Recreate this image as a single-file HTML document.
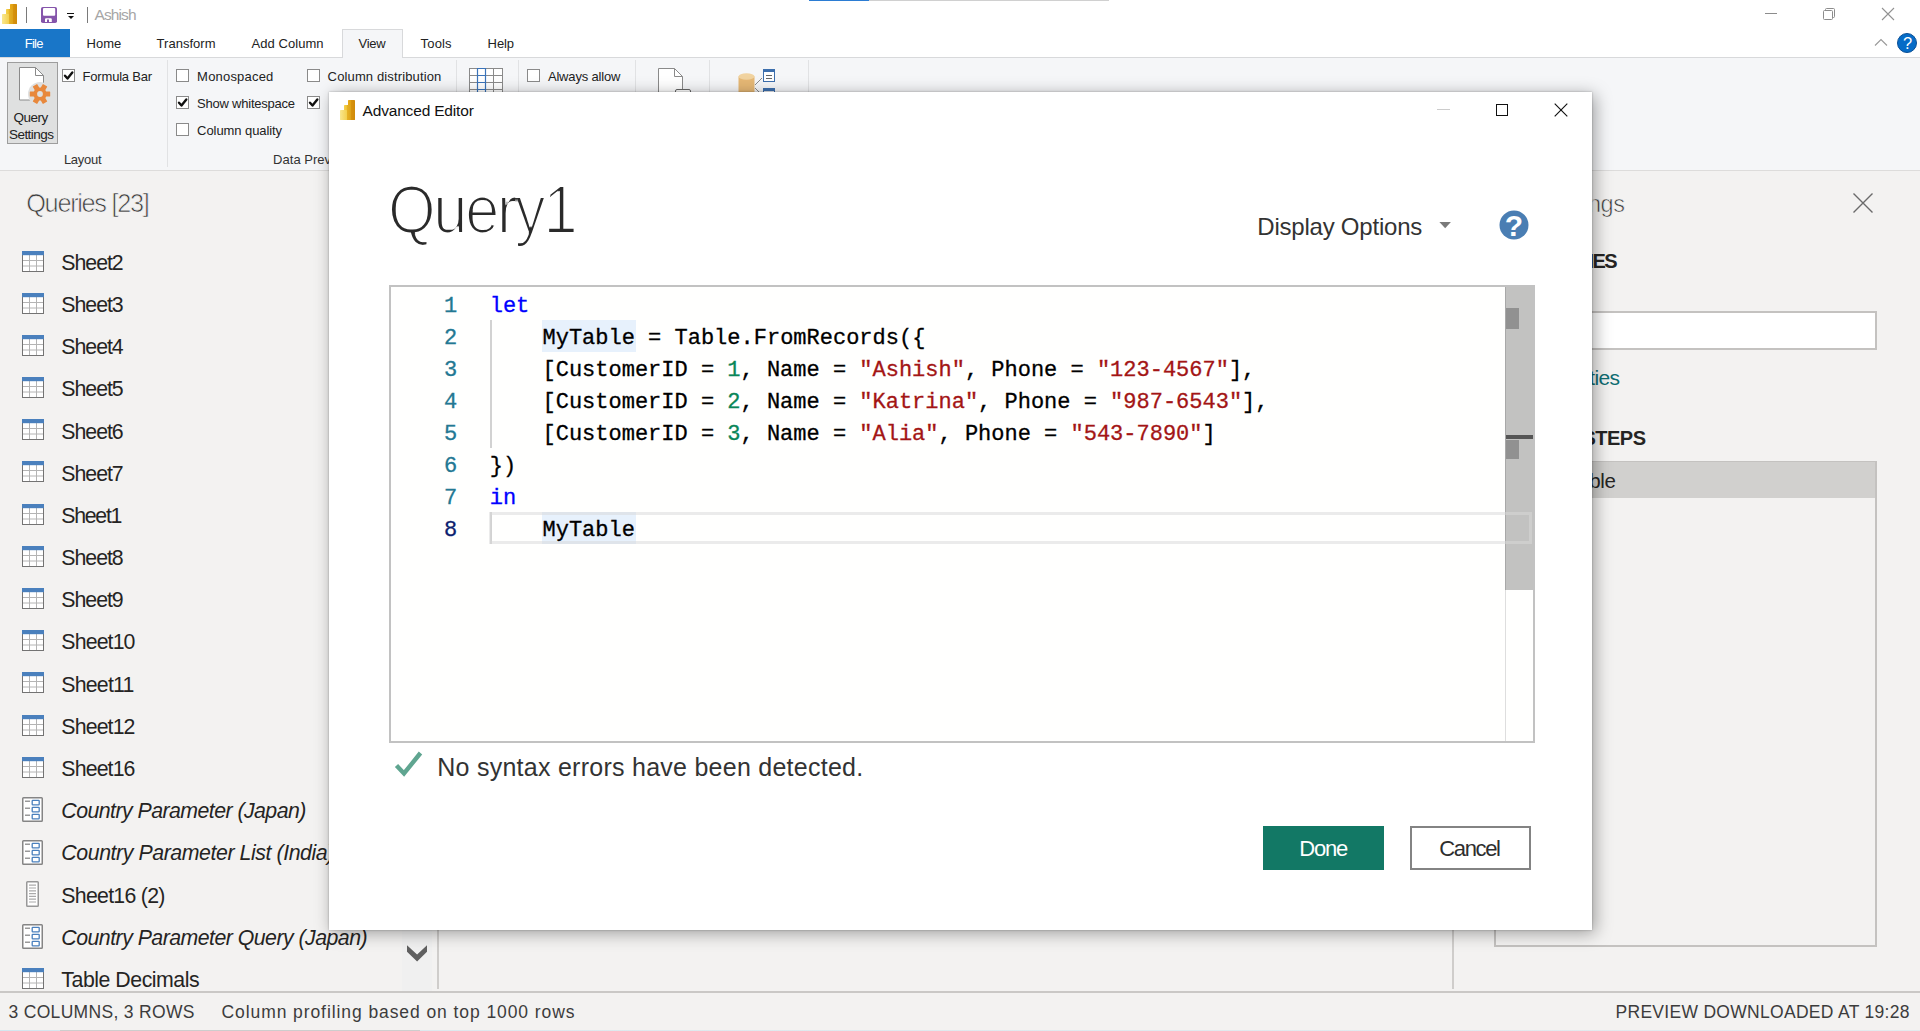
<!DOCTYPE html>
<html lang="en"><head><meta charset="utf-8"><title>Advanced Editor</title>
<style>
*{box-sizing:border-box;margin:0;padding:0}
html,body{width:1920px;height:1031px;overflow:hidden;background:#f3f2f1;font-family:"Liberation Sans",sans-serif}
.a{position:absolute}
.t{position:absolute;white-space:pre;line-height:1;display:block}
.m{font-family:"Liberation Mono",monospace}
#app{position:absolute;left:0;top:0;width:1920px;height:1031px;overflow:hidden}
.cb{position:absolute;width:13px;height:13px;border:1px solid #8a8a8a;background:#fff}
.cb svg{position:absolute;left:0;top:0}
.sep{position:absolute;width:1px;background:#e1e2e4;top:60px;height:107px}
.qi{position:absolute;left:22px;width:22px;height:21px}
.pi{position:absolute;left:22px;width:21px;height:25px}
</style></head><body><div id="app">
<!-- title bar -->
<div class="a" style="left:0;top:0;width:1920px;height:57px;background:#fff"></div>
<div class="a" style="left:809px;top:0;width:60px;height:1px;background:#2b7cd3"></div>
<div class="a" style="left:869px;top:0;width:240px;height:1px;background:#d0d0d0"></div>
<!-- powerbi logo -->
<svg class="a" style="left:2px;top:4px" width="15" height="20" viewBox="0 0 15 20"><defs><linearGradient id="g1" x1="0" x2="1"><stop offset="0" stop-color="#e8ab18"/><stop offset="0.45" stop-color="#e0a012"/><stop offset="0.5" stop-color="#d6920c"/><stop offset="1" stop-color="#cf8a0a"/></linearGradient><linearGradient id="g2" x1="0" x2="1"><stop offset="0" stop-color="#f5d24e"/><stop offset="0.4" stop-color="#efc234"/><stop offset="0.45" stop-color="#e6b225"/><stop offset="1" stop-color="#dda21a"/></linearGradient><linearGradient id="g3" x1="0" x2="1"><stop offset="0" stop-color="#f9e78f"/><stop offset="1" stop-color="#f3d04e"/></linearGradient></defs><rect x="8" y="0" width="7" height="20" rx="0.6" fill="url(#g1)"/><rect x="4" y="5" width="7" height="15" rx="0.6" fill="url(#g2)"/><rect x="0" y="10" width="7" height="10" rx="0.6" fill="url(#g3)"/></svg>
<div class="a" style="left:26px;top:7px;width:1px;height:16px;background:#7a7a7a"></div>
<!-- save icon -->
<svg class="a" style="left:41px;top:7px" width="16" height="16" viewBox="0 0 16 16"><rect x="0" y="0" width="16" height="16" rx="1.8" fill="#8555ab"/><rect x="2" y="0.9" width="12.2" height="7.8" rx="1" fill="#fff"/><path d="M4 14.9v-2.7a1 1 0 0 1 1-1h4.8a1 1 0 0 1 1 1v2.7h-2.8v-2.4h-2v2.4z" fill="#fff"/></svg>
<div class="a" style="left:67px;top:13px;width:7px;height:1px;background:#111"></div>
<div class="a" style="left:67.5px;top:16px;width:0;height:0;border-left:3px solid transparent;border-right:3px solid transparent;border-top:3px solid #111"></div>
<div class="a" style="left:87px;top:7px;width:1px;height:16px;background:#7a7a7a"></div>
<!-- window controls -->
<div class="a" style="left:1765px;top:13px;width:12px;height:1px;background:#8c8c8c"></div>
<svg class="a" style="left:1822px;top:7px" width="14" height="14" viewBox="0 0 14 14" fill="none" stroke="#8c8c8c" stroke-width="1"><rect x="1.5" y="3.5" width="9" height="9" rx="1"/><path d="M3.5 3.5v-1a1 1 0 0 1 1-1h7a1 1 0 0 1 1 1v7a1 1 0 0 1-1 1h-1"/></svg>
<svg class="a" style="left:1881px;top:7px" width="14" height="14" viewBox="0 0 14 14" fill="none" stroke="#929292" stroke-width="1.1"><path d="M1 1l12 12M13 1l-12 12"/></svg>
<!-- tabs -->
<div class="a" style="left:0;top:29px;width:70px;height:28px;background:#1976c8"></div>
<div class="a" style="left:0;top:57px;width:1920px;height:113px;background:#f5f6f8"></div>
<div class="a" style="left:0;top:57px;width:1920px;height:1px;background:#d8d9db"></div>
<div class="a" style="left:342px;top:29px;width:61px;height:29px;background:#f5f6f8;border:1px solid #d8d9db;border-bottom:none"></div>
<div class="a" style="left:0;top:170px;width:1920px;height:1px;background:#dddcdb"></div>
<svg class="a" style="left:1873px;top:37px" width="16" height="10" viewBox="0 0 16 10" fill="none" stroke="#999" stroke-width="1.1"><path d="M2 8.5l6-6 6 6"/></svg>
<div class="a" style="left:1897px;top:33px;width:20px;height:20px;border-radius:50%;background:#066cc7;border:1px solid #0a4f96"></div>
<!-- ribbon -->
<div class="a" style="left:7px;top:62px;width:51px;height:82px;background:#dfe0e0;border:1px solid #9d9d9d"></div>
<svg class="a" style="left:18px;top:66px" width="36" height="40" viewBox="0 0 36 40"><path d="M1.5 1.5h16l8 8v24.5h-24z" fill="#fff" stroke="#8a8a8a" stroke-width="1"/><path d="M17.5 1.5v8h8" fill="none" stroke="#8a8a8a" stroke-width="1"/><circle cx="22" cy="28" r="12" fill="#dfe0e0"/><g transform="translate(22 28) rotate(90)" fill="#e8883c"><circle r="6.6"/><g id="tt"><rect x="-2.6" y="-10.2" width="5.2" height="20.4" rx="0.6"/></g><use href="#tt" transform="rotate(60)"/><use href="#tt" transform="rotate(120)"/><circle r="2.9" fill="#dfe0e0"/></g></svg>
<div class="sep" style="left:167px"></div>
<div class="sep" style="left:456px"></div>
<div class="sep" style="left:518px"></div>
<div class="sep" style="left:635px"></div>
<div class="sep" style="left:709px"></div>
<div class="sep" style="left:808px"></div>
<div class="cb" style="left:62px;top:69px"><svg width="11" height="11" viewBox="0 0 11 11"><path d="M2 5.7L4.5 8.5L9.3 2.5" fill="none" stroke="#111" stroke-width="2.4" stroke-linecap="round" stroke-linejoin="round"/></svg></div>
<div class="cb" style="left:176px;top:69px"></div>
<div class="cb" style="left:176px;top:96px"><svg width="11" height="11" viewBox="0 0 11 11"><path d="M2 5.7L4.5 8.5L9.3 2.5" fill="none" stroke="#111" stroke-width="2.4" stroke-linecap="round" stroke-linejoin="round"/></svg></div>
<div class="cb" style="left:176px;top:123px"></div>
<div class="cb" style="left:307px;top:69px"></div>
<div class="cb" style="left:307px;top:96px"><svg width="11" height="11" viewBox="0 0 11 11"><path d="M2 5.7L4.5 8.5L9.3 2.5" fill="none" stroke="#111" stroke-width="2.4" stroke-linecap="round" stroke-linejoin="round"/></svg></div>
<div class="cb" style="left:527px;top:69px"></div>
<!-- table icon -->
<svg class="a" style="left:469px;top:68px" width="34" height="30" viewBox="0 0 34 30" fill="none" stroke="#8a8a8a" stroke-width="1"><rect x="0.5" y="0.5" width="33" height="29" fill="#fff"/><path d="M8.5 0v30M16.5 0v30M24.5 0v30M0 7.5h34M0 14.5h34M0 21.5h34"/><path d="M8.5 0v30M16.5 0v30M8 7.5h9M8 14.5h9M8 21.5h9M8 0.5h9" stroke="#3b73b9" stroke-width="1.2"/></svg>
<!-- doc icon -->
<svg class="a" style="left:657px;top:67px" width="36" height="30" viewBox="0 0 36 30" fill="none" stroke="#8a8a8a" stroke-width="1"><path d="M1.5 1.5h16l8 8v21h-24z" fill="#fff"/><path d="M17.5 1.5v8h8"/><rect x="18.5" y="22.5" width="15" height="8" rx="1.5" fill="#fff" stroke="#666"/></svg>
<!-- db icon -->
<svg class="a" style="left:738px;top:68px" width="40" height="30" viewBox="0 0 40 30"><path d="M0.5 8.5v22h16v-22z" fill="#e6b875"/><ellipse cx="8.5" cy="8.5" rx="8" ry="3.2" fill="#f1d3a0"/><path d="M17 17l7-7M17 20l5 5" stroke="#8a8a8a" stroke-width="1" fill="none"/><rect x="25.5" y="1.5" width="11" height="12" fill="#fff" stroke="#3d6fad"/><rect x="25" y="1" width="12" height="3" fill="#3d6fad"/><path d="M28 7.5h6M28 10.5h6" stroke="#666"/><rect x="25" y="20" width="12" height="3" fill="#3d6fad"/><rect x="25.5" y="20.5" width="11" height="10" fill="none" stroke="#3d6fad"/></svg>
<!-- queries pane -->
<div class="a" style="left:402px;top:171px;width:30px;height:820px;background:#f0f0f0"></div>
<div class="a" style="left:437px;top:171px;width:2px;height:818px;background:#cfcdcb"></div>
<div class="a" style="left:1452px;top:171px;width:2px;height:818px;background:#cfcdcb"></div>
<svg class="qi" style="top:251px" viewBox="0 0 22 21"><rect x="0.5" y="0.5" width="21" height="20" fill="#fff" stroke="#737373"/><path d="M7.5 4v16M14.5 4v16M1 9.5h20M1 15h20" stroke="#b4b4b4" fill="none"/><rect x="0" y="0" width="22" height="4.2" fill="#4a80bd"/></svg>
<svg class="qi" style="top:293px" viewBox="0 0 22 21"><rect x="0.5" y="0.5" width="21" height="20" fill="#fff" stroke="#737373"/><path d="M7.5 4v16M14.5 4v16M1 9.5h20M1 15h20" stroke="#b4b4b4" fill="none"/><rect x="0" y="0" width="22" height="4.2" fill="#4a80bd"/></svg>
<svg class="qi" style="top:335px" viewBox="0 0 22 21"><rect x="0.5" y="0.5" width="21" height="20" fill="#fff" stroke="#737373"/><path d="M7.5 4v16M14.5 4v16M1 9.5h20M1 15h20" stroke="#b4b4b4" fill="none"/><rect x="0" y="0" width="22" height="4.2" fill="#4a80bd"/></svg>
<svg class="qi" style="top:377px" viewBox="0 0 22 21"><rect x="0.5" y="0.5" width="21" height="20" fill="#fff" stroke="#737373"/><path d="M7.5 4v16M14.5 4v16M1 9.5h20M1 15h20" stroke="#b4b4b4" fill="none"/><rect x="0" y="0" width="22" height="4.2" fill="#4a80bd"/></svg>
<svg class="qi" style="top:419px" viewBox="0 0 22 21"><rect x="0.5" y="0.5" width="21" height="20" fill="#fff" stroke="#737373"/><path d="M7.5 4v16M14.5 4v16M1 9.5h20M1 15h20" stroke="#b4b4b4" fill="none"/><rect x="0" y="0" width="22" height="4.2" fill="#4a80bd"/></svg>
<svg class="qi" style="top:461px" viewBox="0 0 22 21"><rect x="0.5" y="0.5" width="21" height="20" fill="#fff" stroke="#737373"/><path d="M7.5 4v16M14.5 4v16M1 9.5h20M1 15h20" stroke="#b4b4b4" fill="none"/><rect x="0" y="0" width="22" height="4.2" fill="#4a80bd"/></svg>
<svg class="qi" style="top:504px" viewBox="0 0 22 21"><rect x="0.5" y="0.5" width="21" height="20" fill="#fff" stroke="#737373"/><path d="M7.5 4v16M14.5 4v16M1 9.5h20M1 15h20" stroke="#b4b4b4" fill="none"/><rect x="0" y="0" width="22" height="4.2" fill="#4a80bd"/></svg>
<svg class="qi" style="top:546px" viewBox="0 0 22 21"><rect x="0.5" y="0.5" width="21" height="20" fill="#fff" stroke="#737373"/><path d="M7.5 4v16M14.5 4v16M1 9.5h20M1 15h20" stroke="#b4b4b4" fill="none"/><rect x="0" y="0" width="22" height="4.2" fill="#4a80bd"/></svg>
<svg class="qi" style="top:588px" viewBox="0 0 22 21"><rect x="0.5" y="0.5" width="21" height="20" fill="#fff" stroke="#737373"/><path d="M7.5 4v16M14.5 4v16M1 9.5h20M1 15h20" stroke="#b4b4b4" fill="none"/><rect x="0" y="0" width="22" height="4.2" fill="#4a80bd"/></svg>
<svg class="qi" style="top:630px" viewBox="0 0 22 21"><rect x="0.5" y="0.5" width="21" height="20" fill="#fff" stroke="#737373"/><path d="M7.5 4v16M14.5 4v16M1 9.5h20M1 15h20" stroke="#b4b4b4" fill="none"/><rect x="0" y="0" width="22" height="4.2" fill="#4a80bd"/></svg>
<svg class="qi" style="top:672px" viewBox="0 0 22 21"><rect x="0.5" y="0.5" width="21" height="20" fill="#fff" stroke="#737373"/><path d="M7.5 4v16M14.5 4v16M1 9.5h20M1 15h20" stroke="#b4b4b4" fill="none"/><rect x="0" y="0" width="22" height="4.2" fill="#4a80bd"/></svg>
<svg class="qi" style="top:715px" viewBox="0 0 22 21"><rect x="0.5" y="0.5" width="21" height="20" fill="#fff" stroke="#737373"/><path d="M7.5 4v16M14.5 4v16M1 9.5h20M1 15h20" stroke="#b4b4b4" fill="none"/><rect x="0" y="0" width="22" height="4.2" fill="#4a80bd"/></svg>
<svg class="qi" style="top:757px" viewBox="0 0 22 21"><rect x="0.5" y="0.5" width="21" height="20" fill="#fff" stroke="#737373"/><path d="M7.5 4v16M14.5 4v16M1 9.5h20M1 15h20" stroke="#b4b4b4" fill="none"/><rect x="0" y="0" width="22" height="4.2" fill="#4a80bd"/></svg>
<svg class="pi" style="top:797px" viewBox="0 0 21 25" fill="none"><rect x="0.75" y="0.75" width="19.5" height="23.5" rx="0.8" fill="#fff" stroke="#858585" stroke-width="1.5"/><path d="M3 4.3h5M3 11.3h5M3 18.3h5" stroke="#999" stroke-width="1.4"/><rect x="10.2" y="3.4" width="7" height="4.4" rx="0.6" stroke="#4a80bd" stroke-width="1.3"/><rect x="10.2" y="10.4" width="7" height="4.4" rx="0.6" stroke="#4a80bd" stroke-width="1.3"/><rect x="10.2" y="17.4" width="7" height="4.4" rx="0.6" stroke="#4a80bd" stroke-width="1.3"/></svg>
<svg class="pi" style="top:840px" viewBox="0 0 21 25" fill="none"><rect x="0.75" y="0.75" width="19.5" height="23.5" rx="0.8" fill="#fff" stroke="#858585" stroke-width="1.5"/><path d="M3 4.3h5M3 11.3h5M3 18.3h5" stroke="#999" stroke-width="1.4"/><rect x="10.2" y="3.4" width="7" height="4.4" rx="0.6" stroke="#4a80bd" stroke-width="1.3"/><rect x="10.2" y="10.4" width="7" height="4.4" rx="0.6" stroke="#4a80bd" stroke-width="1.3"/><rect x="10.2" y="17.4" width="7" height="4.4" rx="0.6" stroke="#4a80bd" stroke-width="1.3"/></svg>
<svg class="a" style="left:26px;top:881px" width="13" height="26" viewBox="0 0 13 26" fill="none"><rect x="0.75" y="0.75" width="11.5" height="24.5" rx="0.8" fill="#fff" stroke="#989898" stroke-width="1.5"/><path d="M3 4.2h7M3 7h7M3 9.8h7M3 12.6h7M3 15.4h7M3 18.2h7M3 21h7" stroke="#aaa" stroke-width="1.2"/></svg>
<svg class="pi" style="top:924px" viewBox="0 0 21 25" fill="none"><rect x="0.75" y="0.75" width="19.5" height="23.5" rx="0.8" fill="#fff" stroke="#858585" stroke-width="1.5"/><path d="M3 4.3h5M3 11.3h5M3 18.3h5" stroke="#999" stroke-width="1.4"/><rect x="10.2" y="3.4" width="7" height="4.4" rx="0.6" stroke="#4a80bd" stroke-width="1.3"/><rect x="10.2" y="10.4" width="7" height="4.4" rx="0.6" stroke="#4a80bd" stroke-width="1.3"/><rect x="10.2" y="17.4" width="7" height="4.4" rx="0.6" stroke="#4a80bd" stroke-width="1.3"/></svg>
<svg class="qi" style="top:968px" viewBox="0 0 22 21"><rect x="0.5" y="0.5" width="21" height="20" fill="#fff" stroke="#737373"/><path d="M7.5 4v16M14.5 4v16M1 9.5h20M1 15h20" stroke="#b4b4b4" fill="none"/><rect x="0" y="0" width="22" height="4.2" fill="#4a80bd"/></svg>

<svg class="a" style="left:400px;top:940px" width="34" height="26" viewBox="400 940 34 26"><polygon points="407,945.2 417.1,954.5 427,945.2 427,951.8 417.1,961.5 407,951.8" fill="#606060"/></svg>
<!-- right pane -->
<svg class="a" style="left:1852px;top:192px" width="22" height="22" viewBox="0 0 22 22" fill="none" stroke="#6a6a6a" stroke-width="1.4"><path d="M1.5 1.5l19 19M20.5 1.5l-19 19"/></svg>
<div class="a" style="left:1494px;top:311px;width:383px;height:39px;background:#fff;border:2px solid #c4c2c0"></div>
<div class="a" style="left:1494px;top:461px;width:383px;height:486px;border:2px solid #c4c2c0"></div>
<div class="a" style="left:1496px;top:462px;width:379px;height:36px;background:#d1d0ce"></div>
<!-- status bar -->
<div class="a" style="left:0;top:991px;width:1920px;height:2px;background:#cac8c6"></div>
<div class="a" style="left:0;top:1030px;width:1920px;height:1px;background:linear-gradient(90deg,#d3e7ef 0,#d3e7ef 60px,#cdcdcd 60px,#cdcdcd 420px,#dde9ee 420px,#e3ebee 100%)"></div>
<span class="t" style="left:94.53px;top:6.88px;font-size:15.5px;color:#a6a6a6;letter-spacing:-0.906px;">Ashish</span>
<span class="t" style="left:24.81px;top:37.00px;font-size:13px;color:#fff;letter-spacing:-0.751px;">File</span>
<span class="t" style="left:86.61px;top:37.00px;font-size:13px;color:#222;letter-spacing:0.004px;">Home</span>
<span class="t" style="left:156.61px;top:37.00px;font-size:13px;color:#222;letter-spacing:0.019px;">Transform</span>
<span class="t" style="left:251.61px;top:37.00px;font-size:13px;color:#222;letter-spacing:0.050px;">Add Column</span>
<span class="t" style="left:358.61px;top:37.00px;font-size:13px;color:#222;letter-spacing:-0.318px;">View</span>
<span class="t" style="left:420.61px;top:37.00px;font-size:13px;color:#222;letter-spacing:0.160px;">Tools</span>
<span class="t" style="left:487.61px;top:37.00px;font-size:13px;color:#222;letter-spacing:-0.083px;">Help</span>
<span class="t" style="left:1902.91px;top:35.23px;font-size:16.5px;color:#fff;">?</span>
<span class="t" style="left:13.6px;top:110.97px;font-size:13.5px;color:#222;letter-spacing:-0.516px;">Query</span>
<span class="t" style="left:8.9px;top:127.57px;font-size:13.5px;color:#222;letter-spacing:-0.512px;">Settings</span>
<span class="t" style="left:82.61px;top:70.00px;font-size:13px;color:#222;letter-spacing:-0.203px;">Formula Bar</span>
<span class="t" style="left:197.11px;top:70.00px;font-size:13px;color:#222;letter-spacing:0.194px;">Monospaced</span>
<span class="t" style="left:197.11px;top:97.00px;font-size:13px;color:#222;letter-spacing:-0.227px;">Show whitespace</span>
<span class="t" style="left:197.11px;top:124.00px;font-size:13px;color:#222;letter-spacing:-0.077px;">Column quality</span>
<span class="t" style="left:327.61px;top:70.00px;font-size:13px;color:#222;letter-spacing:0.134px;">Column distribution</span>
<span class="t" style="left:547.91px;top:70.00px;font-size:13px;color:#222;letter-spacing:-0.175px;">Always allow</span>
<span class="t" style="left:63.91px;top:153.00px;font-size:13px;color:#333;letter-spacing:-0.269px;">Layout</span>
<span class="t" style="left:273.11px;top:153.00px;font-size:13px;color:#333;letter-spacing:0.017px;">Data Preview</span>
<span class="t" style="left:26.24px;top:190.98px;font-size:25.3px;color:#3a3a3a;letter-spacing:-1.301px;-webkit-text-stroke:0.7px #f3f2f1;">Queries [23]</span>
<span class="t" style="left:61.36px;top:252.87px;font-size:21.3px;color:#252423;letter-spacing:-1.040px;">Sheet2</span>
<span class="t" style="left:61.36px;top:295.05px;font-size:21.3px;color:#252423;letter-spacing:-1.040px;">Sheet3</span>
<span class="t" style="left:61.36px;top:337.23px;font-size:21.3px;color:#252423;letter-spacing:-1.040px;">Sheet4</span>
<span class="t" style="left:61.36px;top:379.41px;font-size:21.3px;color:#252423;letter-spacing:-1.040px;">Sheet5</span>
<span class="t" style="left:61.36px;top:421.59px;font-size:21.3px;color:#252423;letter-spacing:-1.040px;">Sheet6</span>
<span class="t" style="left:61.36px;top:463.77px;font-size:21.3px;color:#252423;letter-spacing:-1.040px;">Sheet7</span>
<span class="t" style="left:61.36px;top:505.95px;font-size:21.3px;color:#252423;letter-spacing:-1.300px;">Sheet1</span>
<span class="t" style="left:61.36px;top:548.13px;font-size:21.3px;color:#252423;letter-spacing:-1.040px;">Sheet8</span>
<span class="t" style="left:61.36px;top:590.31px;font-size:21.3px;color:#252423;letter-spacing:-1.040px;">Sheet9</span>
<span class="t" style="left:61.36px;top:632.49px;font-size:21.3px;color:#252423;letter-spacing:-0.874px;">Sheet10</span>
<span class="t" style="left:61.36px;top:674.67px;font-size:21.3px;color:#252423;letter-spacing:-0.794px;">Sheet11</span>
<span class="t" style="left:61.36px;top:716.85px;font-size:21.3px;color:#252423;letter-spacing:-0.874px;">Sheet12</span>
<span class="t" style="left:61.36px;top:759.03px;font-size:21.3px;color:#252423;letter-spacing:-0.874px;">Sheet16</span>
<span class="t" style="left:61.36px;top:801.21px;font-size:21.3px;color:#252423;font-style:italic;letter-spacing:-0.544px;">Country Parameter (Japan)</span>
<span class="t" style="left:61.36px;top:843.39px;font-size:21.3px;color:#252423;font-style:italic;letter-spacing:-0.423px;">Country Parameter List (India)</span>
<span class="t" style="left:61.36px;top:885.57px;font-size:21.3px;color:#252423;letter-spacing:-0.730px;">Sheet16 (2)</span>
<span class="t" style="left:61.36px;top:927.75px;font-size:21.3px;color:#252423;font-style:italic;letter-spacing:-0.525px;">Country Parameter Query (Japan)</span>
<span class="t" style="left:61.36px;top:969.93px;font-size:21.3px;color:#252423;letter-spacing:-0.470px;">Table Decimals</span>
<span class="t" style="right:295.5999999999999px;top:192.81px;font-size:23.5px;color:#3a3a3a;-webkit-text-stroke:0.6px #f3f2f1;letter-spacing:-0.5px;">Query Settings</span>
<span class="t" style="right:304px;top:250.87px;font-size:20px;color:#252423;font-weight:700;letter-spacing:-1.6px;">PROPERTIES</span>
<span class="t" style="right:300.5px;top:367.22px;font-size:21px;color:#0e6d72;letter-spacing:-0.6px;">All Properties</span>
<span class="t" style="right:274.5px;top:428.07px;font-size:20px;color:#252423;font-weight:700;letter-spacing:-0.5px;">APPLIED STEPS</span>
<span class="t" style="right:304.5px;top:470.65px;font-size:20.5px;color:#252423;letter-spacing:-0.4px;">MyTable</span>
<span class="t" style="left:8.47px;top:1003.69px;font-size:17.5px;color:#3c3c3c;letter-spacing:0.320px;">3 COLUMNS, 3 ROWS</span>
<span class="t" style="left:221.47px;top:1003.69px;font-size:17.5px;color:#3c3c3c;letter-spacing:0.918px;">Column profiling based on top 1000 rows</span>
<span class="t" style="left:1615.47px;top:1003.69px;font-size:17.5px;color:#3c3c3c;letter-spacing:0.298px;">PREVIEW DOWNLOADED AT 19:28</span>
<!-- dialog -->
<svg class="a" width="0" height="0" style="left:0;top:0"><filter id="er" x="-5%" y="-5%" width="110%" height="110%"><feMorphology operator="erode" radius="1"/></filter></svg>
<div class="a" style="left:329px;top:92px;width:1263px;height:838px;background:#fff;box-shadow:3px 3px 16px rgba(0,0,0,.36),0 0 2px rgba(0,0,0,.28)"></div>
<svg class="a" style="left:340px;top:100px" width="15" height="20" viewBox="0 0 15 20"><rect x="8" y="0" width="7" height="20" rx="0.6" fill="url(#g1)"/><rect x="4" y="5" width="7" height="15" rx="0.6" fill="url(#g2)"/><rect x="0" y="10" width="7" height="10" rx="0.6" fill="url(#g3)"/></svg>
<div class="a" style="left:1437px;top:109px;width:13px;height:1px;background:#ccc"></div>
<div class="a" style="left:1496px;top:104px;width:12px;height:12px;border:1.3px solid #111"></div>
<svg class="a" style="left:1554px;top:103px" width="14" height="14" viewBox="0 0 14 14" fill="none" stroke="#111" stroke-width="1.15"><path d="M0.7 0.7l12.6 12.6M13.3 0.7l-12.6 12.6"/></svg>
<svg class="a" style="left:1435px;top:218px" width="20" height="14" viewBox="1435 218 20 14"><polygon points="1439.4,221.9 1450.9,221.9 1445.15,228.2" fill="#7a7a7a"/></svg>
<svg class="a" style="left:1495px;top:206px" width="38" height="38" viewBox="1495 206 38 38"><circle cx="1514" cy="225" r="14.5" fill="#4a7eb3"/></svg>
<!-- editor -->
<div class="a" style="left:389px;top:285px;width:1146px;height:458px;background:#fffffe;border:2px solid #c2c2c2"></div>
<div class="a" style="left:1505px;top:287px;width:1px;height:454px;background:#dedede"></div>
<div class="a" style="left:1505px;top:287px;width:28px;height:303px;background:#c2c2c1;border-left:1px solid #a8a8a8"></div>
<div class="a" style="left:1506px;top:308px;width:13px;height:21px;background:#919191"></div>
<div class="a" style="left:1506px;top:440px;width:13px;height:19px;background:#919191"></div>
<div class="a" style="left:1506px;top:435px;width:27px;height:4px;background:#555"></div>
<div class="a" style="left:489.6px;top:320px;width:2px;height:128px;background:#d2d2d2"></div>
<div class="a" style="left:489.6px;top:512px;width:2px;height:32px;background:#d2d2d2"></div>
<div class="a" style="left:542px;top:320px;width:94px;height:32px;background:#e7f1fc"></div>
<div class="a" style="left:542px;top:512px;width:94px;height:32px;background:#e7f1fc"></div>
<div class="a" style="left:489px;top:512px;width:1043px;height:32px;border:3px solid rgba(216,216,216,.52);border-left-width:2px;border-right-width:3px"></div>
<!-- check -->
<svg class="a" style="left:393px;top:750px" width="32" height="30" viewBox="0 0 32 30" fill="none" stroke="#5fa590" stroke-width="4.4"><path d="M3.5 15.5l7.5 8 16.5-20.5"/></svg>
<!-- buttons -->
<div class="a" style="left:1263px;top:826px;width:121px;height:44px;background:#127865"></div>
<div class="a" style="left:1410px;top:826px;width:121px;height:44px;border:2px solid #838383;background:#fff"></div>
<span class="t" style="left:362.54px;top:102.88px;font-size:15.5px;color:#111;letter-spacing:-0.175px;">Advanced Editor</span>
<span class="t" style="left:388.46px;top:175.04px;font-size:68px;color:#2b2b2b;letter-spacing:-2.489px;filter:url(#er);transform:scaleX(0.9);transform-origin:0 0;">Query1</span>
<span class="t" style="left:1257.28px;top:214.68px;font-size:24px;color:#333;letter-spacing:-0.220px;">Display Options</span>
<span class="t" style="left:1504.7px;top:211.20px;font-size:30px;color:#fff;font-weight:700;">?</span>
<span class="t" style="left:437.25px;top:754.84px;font-size:25px;color:#333;letter-spacing:0.259px;">No syntax errors have been detected.</span>
<span class="t" style="left:1299.34px;top:837.68px;font-size:22px;color:#fff;letter-spacing:-1.198px;">Done</span>
<span class="t" style="left:1439.34px;top:837.68px;font-size:22px;color:#2e2e2e;letter-spacing:-1.377px;">Cancel</span>
<span class="t m" style="left:489.7px;top:296.13px;font-size:22px;color:#0000ff;-webkit-text-stroke:0.3px;">let</span>
<span class="t m" style="left:444px;top:296.13px;font-size:22px;color:#237893;-webkit-text-stroke:0.3px;">1</span>
<span class="t m" style="left:489.7px;top:328.13px;font-size:22px;color:#000;-webkit-text-stroke:0.3px;">    MyTable = Table.FromRecords({</span>
<span class="t m" style="left:444px;top:328.13px;font-size:22px;color:#237893;-webkit-text-stroke:0.3px;">2</span>
<span class="t m" style="left:489.7px;top:360.13px;font-size:22px;color:#000;-webkit-text-stroke:0.3px;">    [CustomerID = </span>
<span class="t m" style="left:727.3px;top:360.13px;font-size:22px;color:#098658;-webkit-text-stroke:0.3px;">1</span>
<span class="t m" style="left:740.5px;top:360.13px;font-size:22px;color:#000;-webkit-text-stroke:0.3px;">, Name = </span>
<span class="t m" style="left:859.3px;top:360.13px;font-size:22px;color:#a31515;-webkit-text-stroke:0.3px;">&quot;Ashish&quot;</span>
<span class="t m" style="left:964.9px;top:360.13px;font-size:22px;color:#000;-webkit-text-stroke:0.3px;">, Phone = </span>
<span class="t m" style="left:1096.9px;top:360.13px;font-size:22px;color:#a31515;-webkit-text-stroke:0.3px;">&quot;123-4567&quot;</span>
<span class="t m" style="left:1228.9px;top:360.13px;font-size:22px;color:#000;-webkit-text-stroke:0.3px;">],</span>
<span class="t m" style="left:444px;top:360.13px;font-size:22px;color:#237893;-webkit-text-stroke:0.3px;">3</span>
<span class="t m" style="left:489.7px;top:392.13px;font-size:22px;color:#000;-webkit-text-stroke:0.3px;">    [CustomerID = </span>
<span class="t m" style="left:727.3px;top:392.13px;font-size:22px;color:#098658;-webkit-text-stroke:0.3px;">2</span>
<span class="t m" style="left:740.5px;top:392.13px;font-size:22px;color:#000;-webkit-text-stroke:0.3px;">, Name = </span>
<span class="t m" style="left:859.3px;top:392.13px;font-size:22px;color:#a31515;-webkit-text-stroke:0.3px;">&quot;Katrina&quot;</span>
<span class="t m" style="left:978.1px;top:392.13px;font-size:22px;color:#000;-webkit-text-stroke:0.3px;">, Phone = </span>
<span class="t m" style="left:1110.1px;top:392.13px;font-size:22px;color:#a31515;-webkit-text-stroke:0.3px;">&quot;987-6543&quot;</span>
<span class="t m" style="left:1242.1px;top:392.13px;font-size:22px;color:#000;-webkit-text-stroke:0.3px;">],</span>
<span class="t m" style="left:444px;top:392.13px;font-size:22px;color:#237893;-webkit-text-stroke:0.3px;">4</span>
<span class="t m" style="left:489.7px;top:424.13px;font-size:22px;color:#000;-webkit-text-stroke:0.3px;">    [CustomerID = </span>
<span class="t m" style="left:727.3px;top:424.13px;font-size:22px;color:#098658;-webkit-text-stroke:0.3px;">3</span>
<span class="t m" style="left:740.5px;top:424.13px;font-size:22px;color:#000;-webkit-text-stroke:0.3px;">, Name = </span>
<span class="t m" style="left:859.3px;top:424.13px;font-size:22px;color:#a31515;-webkit-text-stroke:0.3px;">&quot;Alia&quot;</span>
<span class="t m" style="left:938.5px;top:424.13px;font-size:22px;color:#000;-webkit-text-stroke:0.3px;">, Phone = </span>
<span class="t m" style="left:1070.5px;top:424.13px;font-size:22px;color:#a31515;-webkit-text-stroke:0.3px;">&quot;543-7890&quot;</span>
<span class="t m" style="left:1202.5px;top:424.13px;font-size:22px;color:#000;-webkit-text-stroke:0.3px;">]</span>
<span class="t m" style="left:444px;top:424.13px;font-size:22px;color:#237893;-webkit-text-stroke:0.3px;">5</span>
<span class="t m" style="left:489.7px;top:456.13px;font-size:22px;color:#000;-webkit-text-stroke:0.3px;">})</span>
<span class="t m" style="left:444px;top:456.13px;font-size:22px;color:#237893;-webkit-text-stroke:0.3px;">6</span>
<span class="t m" style="left:489.7px;top:488.13px;font-size:22px;color:#0000ff;-webkit-text-stroke:0.3px;">in</span>
<span class="t m" style="left:444px;top:488.13px;font-size:22px;color:#237893;-webkit-text-stroke:0.3px;">7</span>
<span class="t m" style="left:489.7px;top:520.13px;font-size:22px;color:#000;-webkit-text-stroke:0.3px;">    MyTable</span>
<span class="t m" style="left:444px;top:520.13px;font-size:22px;color:#0b216f;-webkit-text-stroke:0.3px;">8</span>
</div></body></html>
